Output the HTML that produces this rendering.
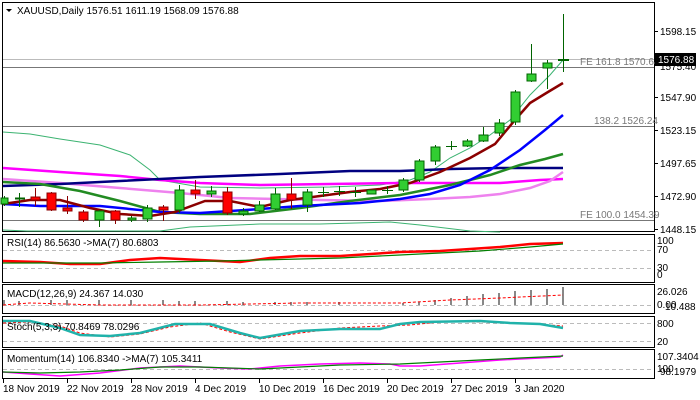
<!DOCTYPE html>
<html><head><meta charset="utf-8"><style>
html,body{margin:0;padding:0;background:#fff;width:700px;height:400px;overflow:hidden}
svg{display:block;font-family:"Liberation Sans",sans-serif;font-size:10px}
</style></head><body>
<svg width="700" height="400" viewBox="0 0 700 400">
<rect width="700" height="400" fill="#fff"/>
<!-- panel borders -->
<g fill="none" stroke="#000" stroke-width="1">
<rect x="2.5" y="2.5" width="652" height="229"/>
<rect x="2.5" y="234.5" width="652" height="48"/>
<rect x="2.5" y="284.5" width="652" height="29"/>
<rect x="2.5" y="316.5" width="652" height="31"/>
<rect x="2.5" y="349.5" width="652" height="29"/>
</g>
<!-- horizontal levels -->
<line x1="3" y1="59.5" x2="654" y2="59.5" stroke="#bbb"/>
<line x1="3" y1="67.5" x2="654" y2="67.5" stroke="#777"/>
<line x1="3" y1="126.5" x2="654" y2="126.5" stroke="#777"/>
<line x1="3" y1="220.5" x2="654" y2="220.5" stroke="#777"/>
<text x="580" y="65" fill="#777">FE 161.8 1570.64</text>
<text x="594" y="124" fill="#777">138.2 1526.24</text>
<text x="580" y="218" fill="#777">FE 100.0 1454.39</text>
<!-- bollinger -->
<polyline fill="none" stroke="#3cb371" stroke-width="1" points="3,132 30,134 60,139 100,145 130,155 150,170 160,180 200,187 260,188 330,187 380,185 410,180 430,172 450,158 470,148 490,135 510,120 530,95 550,75 563,60"/>
<polyline fill="none" stroke="#3cb371" stroke-width="1" points="3,230 27,231 160,231 190,227 260,224 320,224 390,222 420,225 470,231 500,232"/>
<!-- MAs -->
<polyline fill="none" stroke="#ff00ff" stroke-width="2.5" points="3,168 60,172 120,176 160,180 200,183 260,185 330,184 400,183 450,183 500,183 540,180 563,179"/>
<polyline fill="none" stroke="#ee82ee" stroke-width="2.5" points="3,179 60,183 120,188 180,193 230,198 320,200 380,201 430,199 470,197 500,194 530,188 550,181 563,172"/>
<polyline fill="none" stroke="#000080" stroke-width="2.5" points="3,186 60,184 120,181 200,177 280,174 350,171 400,171 450,169 500,168 563,168"/>
<polyline fill="none" stroke="#228b22" stroke-width="2.5" points="3,182 40,184 80,191 120,201 160,212 200,214 250,214 300,208 350,201 400,195 450,185 490,175 520,165 545,159 563,154"/>
<polyline fill="none" stroke="#0000ff" stroke-width="2.5" points="3,204 40,206 100,206 160,212 200,213 260,209 300,206 360,203 400,199 430,194 460,185 490,170 520,150 545,130 563,115"/>
<polyline fill="none" stroke="#8b0000" stroke-width="2.5" points="3,204 30,200 60,200 90,208 120,214 150,216 175,212 205,201 230,201 260,207 290,200 320,196 350,192 380,189 410,183 440,172 470,158 495,144 515,120 530,103 548,92 563,83"/>
<!-- candles -->
<g stroke="#006400" stroke-width="1">
<line x1="4.5" y1="196" x2="4.5" y2="206"/><rect x="1" y="198" width="7" height="6" fill="#32cd32"/>
<line x1="19.5" y1="193" x2="19.5" y2="207"/><line x1="15" y1="198.5" x2="25" y2="198.5" stroke-width="2"/>
<line x1="131.5" y1="216" x2="131.5" y2="222"/><rect x="128" y="218" width="8" height="2" fill="#32cd32"/>
<line x1="147.5" y1="205" x2="147.5" y2="222"/><rect x="143" y="208" width="9" height="11" fill="#32cd32"/>
<line x1="99.5" y1="210" x2="99.5" y2="227"/><rect x="95" y="211" width="9" height="9" fill="#32cd32"/>
<line x1="179.5" y1="185" x2="179.5" y2="213"/><rect x="175" y="190" width="9" height="20" fill="#32cd32"/>
<line x1="211.5" y1="186" x2="211.5" y2="197"/><rect x="207" y="191" width="9" height="3" fill="#32cd32"/>
<line x1="243.5" y1="208" x2="243.5" y2="216"/><rect x="239" y="211" width="9" height="3" fill="#32cd32"/>
<line x1="259.5" y1="201" x2="259.5" y2="212"/><rect x="255" y="205" width="9" height="6" fill="#32cd32"/>
<line x1="275.5" y1="188" x2="275.5" y2="210"/><rect x="271" y="194" width="9" height="15" fill="#32cd32"/>
<line x1="307.5" y1="189" x2="307.5" y2="212"/><rect x="303" y="192" width="9" height="13" fill="#32cd32"/>
<line x1="323.5" y1="187" x2="323.5" y2="197"/><line x1="318" y1="192.5" x2="329" y2="192.5"/>
<line x1="339.5" y1="186" x2="339.5" y2="196"/><line x1="334" y1="191.5" x2="345" y2="191.5"/>
<line x1="355.5" y1="187" x2="355.5" y2="197"/><line x1="350" y1="192.5" x2="361" y2="192.5"/>
<rect x="367" y="190" width="9" height="4" fill="#32cd32"/>
<line x1="387.5" y1="186" x2="387.5" y2="194"/><line x1="382" y1="190.5" x2="393" y2="190.5"/>
<line x1="403.5" y1="178" x2="403.5" y2="192"/><rect x="399" y="180" width="9" height="10" fill="#32cd32"/>
<line x1="419.5" y1="159" x2="419.5" y2="182"/><rect x="415" y="161" width="9" height="19" fill="#32cd32"/>
<line x1="435.5" y1="145" x2="435.5" y2="165"/><rect x="431" y="147" width="9" height="14" fill="#32cd32"/>
<line x1="451.5" y1="141" x2="451.5" y2="150"/><line x1="446" y1="146.5" x2="457" y2="146.5"/>
<line x1="467.5" y1="139" x2="467.5" y2="147"/><rect x="463" y="141" width="9" height="5" fill="#32cd32"/>
<line x1="483.5" y1="127" x2="483.5" y2="142"/><rect x="479" y="135" width="9" height="6" fill="#32cd32"/>
<line x1="499.5" y1="119" x2="499.5" y2="136"/><rect x="495" y="123" width="9" height="10" fill="#32cd32"/>
<line x1="515.5" y1="90" x2="515.5" y2="125"/><rect x="511" y="92" width="9" height="30" fill="#32cd32"/>
<line x1="531.5" y1="44" x2="531.5" y2="82"/><rect x="527" y="74" width="9" height="7" fill="#32cd32"/>
<line x1="547.5" y1="60" x2="547.5" y2="89"/><rect x="543" y="63" width="9" height="5" fill="#32cd32"/>
<line x1="563.5" y1="14" x2="563.5" y2="72"/><line x1="558" y1="60" x2="569" y2="60" stroke-width="2"/>
</g>
<g stroke="#8b0000" stroke-width="1">
<line x1="35.5" y1="188" x2="35.5" y2="206"/><rect x="31" y="197" width="9" height="3" fill="#f00"/>
<line x1="51.5" y1="192" x2="51.5" y2="211"/><rect x="47" y="193" width="9" height="17" fill="#f00"/>
<line x1="67.5" y1="196" x2="67.5" y2="214"/><rect x="63" y="208" width="9" height="3" fill="#f00"/>
<line x1="83.5" y1="210" x2="83.5" y2="222"/><rect x="79" y="212" width="9" height="8" fill="#f00"/>
<line x1="115.5" y1="210" x2="115.5" y2="224"/><rect x="111" y="211" width="9" height="9" fill="#f00"/>
<line x1="163.5" y1="205" x2="163.5" y2="221"/><rect x="159" y="207" width="9" height="3" fill="#f00"/>
<line x1="195.5" y1="180" x2="195.5" y2="199"/><rect x="191" y="190" width="9" height="4" fill="#f00"/>
<line x1="227.5" y1="187" x2="227.5" y2="215"/><rect x="223" y="192" width="9" height="21" fill="#f00"/>
<line x1="291.5" y1="178" x2="291.5" y2="209"/><rect x="287" y="194" width="9" height="6" fill="#f00"/>
</g>
<!-- title -->
<path d="M6 9 L12 9 L9 12 Z" fill="#000"/>
<text x="17" y="14" fill="#000">XAUUSD,Daily  1576.51 1611.19 1568.09 1576.88</text>
<!-- price axis -->
<g fill="#000">
<text x="660" y="35">1598.15</text>
<text x="660" y="101">1547.90</text>
<text x="660" y="134">1523.15</text>
<text x="660" y="167">1497.65</text>
<text x="660" y="200">1472.90</text>
<text x="660" y="233">1448.15</text>
</g>
<g stroke="#000"><line x1="654" y1="31.5" x2="658" y2="31.5"/><line x1="654" y1="97.5" x2="658" y2="97.5"/><line x1="654" y1="130.5" x2="658" y2="130.5"/><line x1="654" y1="163.5" x2="658" y2="163.5"/><line x1="654" y1="196.5" x2="658" y2="196.5"/><line x1="654" y1="229.5" x2="658" y2="229.5"/></g>
<text x="660" y="70" fill="#000">1575.40</text>
<rect x="655" y="53" width="41" height="13" fill="#000"/>
<text x="658" y="63" fill="#fff">1576.88</text>
<!-- RSI -->
<g stroke="#bbb" stroke-dasharray="4,3"><line x1="3" y1="250.5" x2="654" y2="250.5"/><line x1="3" y1="268.5" x2="654" y2="268.5"/></g>
<polyline fill="none" stroke="#f00" stroke-width="2.5" points="3,261 40,262 70,264 100,264 130,260 160,258 220,261 240,262 270,258 300,256 340,256 400,252 440,251 500,247 530,244 563,243"/>
<polyline fill="none" stroke="#008000" stroke-width="1.2" points="3,263 40,263 100,263 160,262 220,261 300,259 340,258 400,255 440,253 480,251 530,247 563,244"/>
<text x="7" y="246" fill="#000">RSI(14) 86.5630  -&gt;MA(7) 80.6803</text>
<g fill="#000"><text x="657" y="244">100</text><text x="657" y="253">70</text><text x="657" y="271">30</text><text x="657" y="278">0</text></g>
<!-- MACD -->
<line x1="3" y1="305.5" x2="654" y2="305.5" stroke="#bbb" stroke-dasharray="4,3"/>
<g stroke="#888" stroke-width="2">
<line x1="4" y1="305" x2="4" y2="300"/><line x1="19" y1="305" x2="19" y2="301"/><line x1="51" y1="305" x2="51" y2="300"/><line x1="67" y1="305" x2="67" y2="300"/><line x1="99" y1="305" x2="99" y2="300"/><line x1="131" y1="305" x2="131" y2="300"/><line x1="163" y1="305" x2="163" y2="300"/><line x1="179" y1="305" x2="179" y2="301"/><line x1="195" y1="305" x2="195" y2="301"/><line x1="227" y1="305" x2="227" y2="301"/><line x1="243" y1="305" x2="243" y2="302"/><line x1="275" y1="305" x2="275" y2="302"/><line x1="291" y1="305" x2="291" y2="302"/><line x1="307" y1="305" x2="307" y2="302"/><line x1="339" y1="305" x2="339" y2="302"/>
<line x1="403" y1="305" x2="403" y2="303"/><line x1="419" y1="305" x2="419" y2="302"/><line x1="435" y1="305" x2="435" y2="300"/><line x1="451" y1="305" x2="451" y2="298"/><line x1="467" y1="305" x2="467" y2="296"/><line x1="483" y1="305" x2="483" y2="294"/><line x1="499" y1="305" x2="499" y2="293"/><line x1="515" y1="305" x2="515" y2="291"/><line x1="531" y1="305" x2="531" y2="290"/><line x1="547" y1="305" x2="547" y2="289"/><line x1="563" y1="305" x2="563" y2="287"/>
</g>
<polyline fill="none" stroke="#f00" stroke-dasharray="3,2" points="3,305 30,303 100,305 200,305 300,303 400,303 450,300 500,298 563,295"/>
<text x="7" y="297" fill="#000">MACD(12,26,9) 24.367 14.030</text>
<g fill="#000"><text x="657" y="295">26.026</text><text x="657" y="308">0.00</text><text x="665" y="310">10.488</text></g>
<!-- Stoch -->
<g stroke="#bbb" stroke-dasharray="4,3"><line x1="3" y1="323.5" x2="654" y2="323.5"/><line x1="3" y1="341.5" x2="654" y2="341.5"/></g>
<polyline fill="none" stroke="#f00" stroke-dasharray="3,2" points="3,323 30,322 60,326 80,333 110,337 140,334 170,327 200,323 230,332 260,339 300,333 340,328 380,326 410,325 440,322 480,322 520,323 563,326"/>
<polyline fill="none" stroke="#20b2aa" stroke-width="2.5" points="3,321 30,321 60,328 80,335 110,336 140,333 175,324 210,324 240,333 260,338 300,331 340,329 380,329 400,324 420,322 480,321 510,323 540,324 563,328"/>
<text x="7" y="330" fill="#000">Stoch(5,3,3) 70.8469 78.0296</text>
<g fill="#000"><text x="657" y="327">800</text><text x="657" y="345">20</text></g>
<!-- Momentum -->
<line x1="3" y1="369.5" x2="654" y2="369.5" stroke="#bbb" stroke-dasharray="4,3"/>
<polyline fill="none" stroke="#f0f" stroke-width="1.5" points="3,372 30,374 60,376 100,373 140,368 180,366 220,368 250,369 280,366 320,364 360,363 390,364 400,366 420,366 460,363 500,360 560,357 563,355"/>
<polyline fill="none" stroke="#008000" stroke-width="1.2" points="3,372 40,373 80,372 120,370 160,367 200,367 260,369 300,367 340,365 400,364 440,362 480,360 520,358 563,356"/>
<text x="7" y="362" fill="#000">Momentum(14) 106.8340  -&gt;MA(7) 105.3411</text>
<g fill="#000"><text x="657" y="360">107.3404</text><text x="657" y="372">100</text><text x="660" y="375">98.1979</text></g>
<!-- dates -->
<g stroke="#000"><line x1="3.5" y1="379" x2="3.5" y2="383"/><line x1="67.5" y1="379" x2="67.5" y2="383"/><line x1="131.5" y1="379" x2="131.5" y2="383"/><line x1="195.5" y1="379" x2="195.5" y2="383"/><line x1="259.5" y1="379" x2="259.5" y2="383"/><line x1="323.5" y1="379" x2="323.5" y2="383"/><line x1="387.5" y1="379" x2="387.5" y2="383"/><line x1="451.5" y1="379" x2="451.5" y2="383"/><line x1="515.5" y1="379" x2="515.5" y2="383"/></g>
<g fill="#000">
<text x="3" y="392">18 Nov 2019</text><text x="67" y="392">22 Nov 2019</text><text x="131" y="392">28 Nov 2019</text><text x="195" y="392">4 Dec 2019</text><text x="259" y="392">10 Dec 2019</text><text x="323" y="392">16 Dec 2019</text><text x="387" y="392">20 Dec 2019</text><text x="451" y="392">27 Dec 2019</text><text x="515" y="392">3 Jan 2020</text>
</g>
</svg>
</body></html>
